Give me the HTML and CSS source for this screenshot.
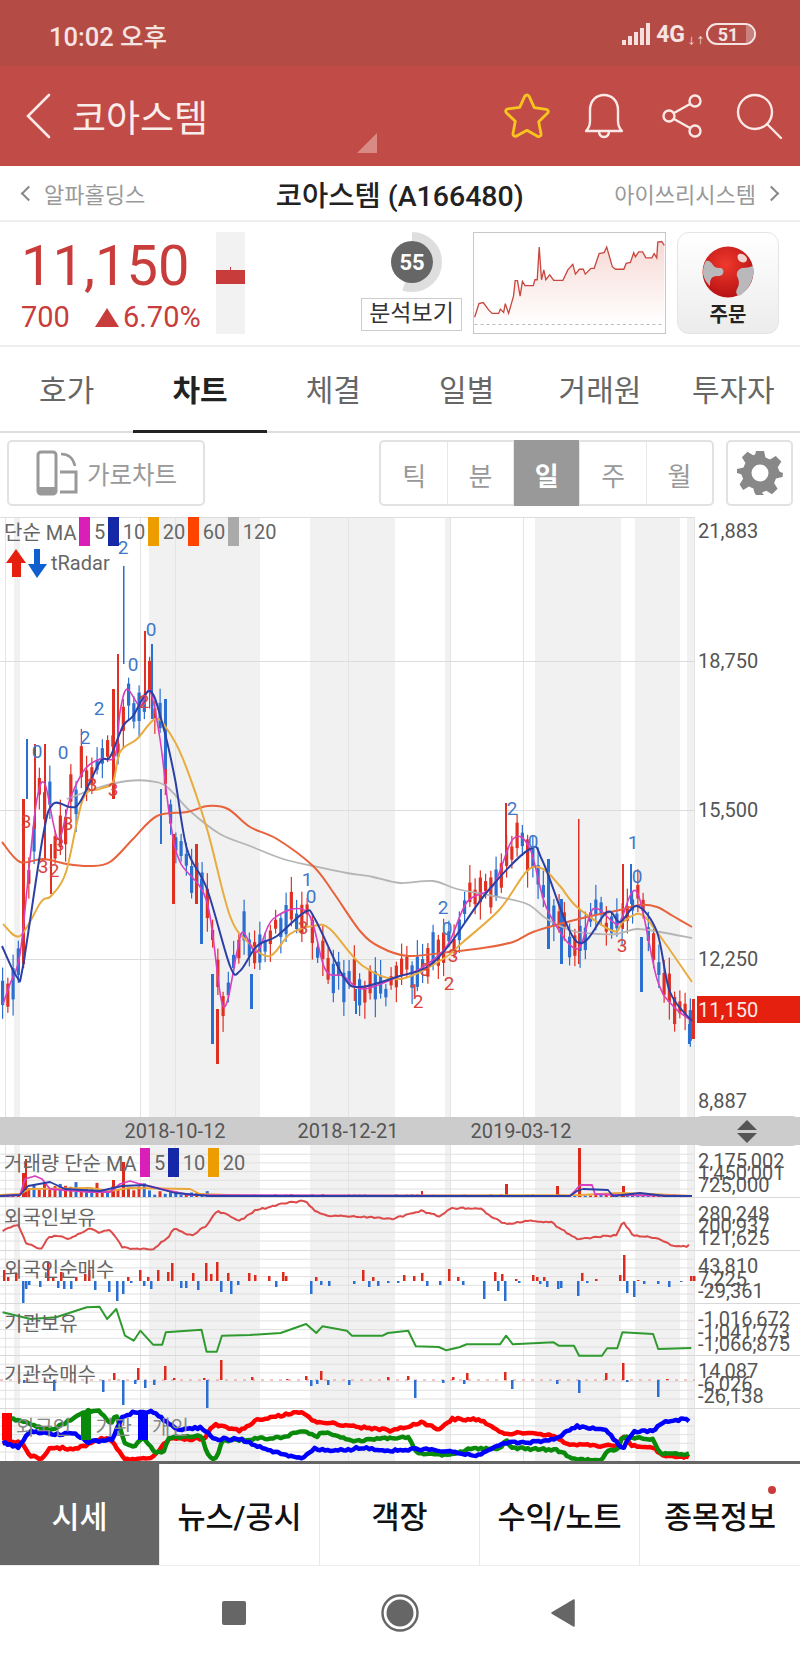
FILE: index.html
```html
<!DOCTYPE html>
<html lang="ko">

<head>
    <meta charset="UTF-8">
    <meta name="viewport" content="width=device-width, initial-scale=1.0">
    <title>코아스템</title>

    <link rel="stylesheet" href="styles.css">
</head>

<body>
    <div class="status-bar">
        <span class="clock">10:02 오후</span>
        <div class="status-right">
            <svg class="signal" width="32" height="24" viewBox="0 0 32 24">
                <path d="M1 18h4v5H1zM7 14h4v9H7zM13 10h4v13h-4zM19 6h4v17h-4zM25 1h4v22h-4z" fill="#f6dedc"/>
            </svg>
            <span class="net">4G</span>
            <span class="net-arrows">↓↑</span>
            <div class="battery"><span class="battery-level"></span><span class="battery-num">51</span></div>
        </div>
    </div>

    <header class="app-header">
        <svg class="back" width="26" height="46" viewBox="0 0 26 46">
            <path d="M24 2L3 23l21 21" fill="none" stroke="#fbe9e7" stroke-width="2.6" stroke-linecap="round"/>
        </svg>
        <h1 class="stock-title">코아스템</h1>
        <span class="corner-mark"></span>
        <div class="header-icons">
            <svg class="ic-star" width="50" height="48" viewBox="0 0 50 48">
                <path d="M25 3c1 0 1.800 .6 2.300 1.700l5 11 11.800 1.600c2.200 .3 2.900 2.600 1.300 4l-8.700 8.400 2.300 12.100c.4 2.100-1.700 3.500-3.600 2.500L25 38.300l-10.400 5.600c-1.900 1-4-.4-3.600-2.500l2.300-12.100-8.700-8.400c-1.600-1.400-.9-3.700 1.300-4l11.800-1.600 5-11C23.200 3.600 24 3 25 3z" fill="none" stroke="#f7c51e" stroke-width="2.800" stroke-linejoin="round"/>
            </svg>
            <svg class="ic-bell" width="42" height="46" viewBox="0 0 42 46">
                <path d="M3 38c3-3 4-6 4-10V17C7 8 13 2 21 2s14 6 14 15v11c0 4 1 7 4 10zM16 38c0 4 2 6 5 6s5-2 5-6" fill="none" stroke="#fbe9e7" stroke-width="2.400" stroke-linejoin="round"/>
            </svg>
            <svg class="ic-share" width="42" height="46" viewBox="0 0 42 46">
                <circle cx="33" cy="8" r="5.500" fill="none" stroke="#fbe9e7" stroke-width="2.400"/>
                <circle cx="7" cy="23" r="5.500" fill="none" stroke="#fbe9e7" stroke-width="2.400"/>
                <circle cx="33" cy="38" r="5.500" fill="none" stroke="#fbe9e7" stroke-width="2.400"/>
                <path d="M12 20l16-9M12 26l16 9" stroke="#fbe9e7" stroke-width="2.400"/>
            </svg>
            <svg class="ic-search" width="48" height="48" viewBox="0 0 48 48">
                <circle cx="20" cy="20" r="17" fill="none" stroke="#fbe9e7" stroke-width="2.400"/>
                <path d="M32 32l14 14" stroke="#fbe9e7" stroke-width="2.400" stroke-linecap="round"/>
            </svg>
        </div>
    </header>

    <nav class="stock-nav">
        <a class="stock-link"><i class="chev chev-left"></i>알파홀딩스</a>
        <strong class="stock-name">코아스템 (A166480)</strong>
        <a class="stock-link">아이쓰리시스템<i class="chev chev-right"></i></a>
    </nav>

    <section class="quote">
        <div class="price-box">
            <div class="price">11,150</div>
            <div class="change"><span>700</span><i class="up-tri"></i><span>6.70%</span></div>
        </div>
        <div class="day-candle"><span class="day-body"></span></div>
        <div class="score">
            <svg width="62" height="62" viewBox="0 0 62 62">
                <circle cx="31" cy="31" r="25.500" fill="none" stroke="#dedede" stroke-width="9" stroke-dasharray="88 200" transform="rotate(-90 31 31)"/>
                <circle cx="31" cy="31" r="21" fill="#666"/>
                <text x="31" y="38.500" text-anchor="middle" class="score-num">55</text>
            </svg>
            <span class="score-btn">분석보기</span>
        </div>
        <div class="spark">
            <svg width="191" height="100" viewBox="340 22 580 306" preserveAspectRatio="none">
                <defs>
                    <linearGradient id="sparkFill" x1="0" y1="0" x2="0" y2="1">
                        <stop offset="0" stop-color="#f6d9d4"/>
                        <stop offset="1" stop-color="#ffffff"/>
                    </linearGradient>
                </defs>
                <path d="M342 280L355 238 368 235 385 258 395 268 415 268 420 255 430 265 435 238 445 268 460 215 465 168 472 168 480 215 487 170 495 183 520 183 525 165 532 165 538 65 545 165 552 135 558 165 570 150 582 167 610 167 625 135 640 118 648 148 660 133 672 133 678 148 695 130 705 130 720 85 735 82 743 65 760 125 770 133 795 133 802 115 815 112 825 82 830 95 840 80 852 80 862 98 880 98 887 85 895 98 898 50 910 48 918 60V300H342z" fill="url(#sparkFill)"/>
                <path d="M342 280L355 238 368 235 385 258 395 268 415 268 420 255 430 265 435 238 445 268 460 215 465 168 472 168 480 215 487 170 495 183 520 183 525 165 532 165 538 65 545 165 552 135 558 165 570 150 582 167 610 167 625 135 640 118 648 148 660 133 672 133 678 148 695 130 705 130 720 85 735 82 743 65 760 125 770 133 795 133 802 115 815 112 825 82 830 95 840 80 852 80 862 98 880 98 887 85 895 98 898 50 910 48 918 60" fill="none" stroke="#c8473f" stroke-width="4"/>
                <path d="M342 302H918" stroke="#bbb" stroke-width="3" stroke-dasharray="9 9"/>
            </svg>
        </div>
        <div class="order-btn">
            <svg width="52" height="52" viewBox="0 0 52 52">
                <defs>
                    <radialGradient id="ballRed" cx=".45" cy=".35" r=".7">
                        <stop offset="0" stop-color="#f0392c"/>
                        <stop offset="1" stop-color="#b30f12"/>
                    </radialGradient>
                </defs>
                <circle cx="26" cy="26" r="25.500" fill="url(#ballRed)"/>
                <path d="M1 26c0-4 1-8 3-11 3-1 5 1 7 4 2 3 5 3 8 3 3 1 3 5 1 7-3 2-6 0-9 2-3 2-3 5-3 9-4-4-7-9-7-14z" fill="#b9b8bb"/>
                <path d="M51 20c2 10-2 21-12 29-4 2-6-2-4-6 3-5 2-9 0-13-1-5 3-8 6-8 3 0 7-1 10-2z" fill="#b9b8bb"/>
                <path d="M37 8c3-1 8 2 8 5 0 3-3 4-6 3-3-1-5-6-2-8z" fill="#f0d4d0"/>
            </svg>
            <span>주문</span>
        </div>
    </section>

    <div class="tabs">
        <div class="tab">호가</div>
        <div class="tab tab-on">차트</div>
        <div class="tab">체결</div>
        <div class="tab">일별</div>
        <div class="tab">거래원</div>
        <div class="tab">투자자</div>
    </div>

    <div class="toolbar">
        <div class="land-btn">
            <svg width="42" height="46" viewBox="0 0 42 46">
                <rect x="2" y="2" width="18" height="42" rx="3" fill="none" stroke="#999" stroke-width="3"/>
                <rect x="2" y="37" width="18" height="7" fill="#999"/>
                <path d="M24 22h16v20H24" fill="none" stroke="#999" stroke-width="3"/>
                <path d="M25 4c6 0 12 3 14 12" fill="none" stroke="#999" stroke-width="2.500"/>
            </svg>
            <span>가로차트</span>
        </div>
        <div class="periods">
            <div class="period">틱</div>
            <div class="period">분</div>
            <div class="period period-on">일</div>
            <div class="period">주</div>
            <div class="period">월</div>
        </div>
        <div class="gear-btn">
            <svg width="46" height="46" viewBox="0 0 46 46">
                <path d="M19 1h8l1.500 6.500 4.500 1.900 5.700-3.500 5.600 5.600-3.500 5.700 1.900 4.500L46 23v0l-.5 4-6.500 1.500-1.900 4.500 3.500 5.700-5.600 5.600-5.700-3.500-4.500 1.900L27 45h-8l-1.500-2.300-1.100-4.200-4.500-1.900-5.700 3.500-3.600-5.600 3.500-5.700L4.200 24.300 0 23v-4l6.500-1.500 1.900-4.500-3.500-5.700 5.600-5.600 5.700 3.500 1.900-.8z" fill="#888"/>
                <circle cx="23" cy="23" r="8.500" fill="#fff"/>
            </svg>
        </div>
    </div>

    <section class="chart">
        <div class="chart-main">
            <svg id="mainChart" width="800" height="600" viewBox="0 518 800 600"></svg>
            <div class="ma-legend">
                <span>단순 MA</span><i class="sw sw-5"></i><span>5</span><i class="sw sw-10"></i><span>10</span><i class="sw sw-20"></i><span>20</span><i class="sw sw-60"></i><span>60</span><i class="sw sw-120"></i><span>120</span>
            </div>
            <div class="radar-legend">
                <svg width="46" height="30" viewBox="0 0 46 30">
                    <path d="M14 1l10 14h-5v14h-9V15H4z" fill="#e5200e"/>
                    <path d="M32 1h6v15h7L35 30 26 16h6z" fill="#0f5fcf"/>
                </svg>
                <span>tRadar</span>
            </div>
        </div>
        <div class="date-bar">
            <span class="date d1">2018-10-12</span>
            <span class="date d2">2018-12-21</span>
            <span class="date d3">2019-03-12</span>
            <div class="handle"><i class="tri-up"></i><i class="tri-down"></i></div>
        </div>
        <div class="chart-sub">
            <svg id="subChart" width="800" height="316" viewBox="0 1146 800 316"></svg>
            <div class="sub-legend sl-vol">
                <span>거래량 단순 MA</span><i class="sw sw-5"></i><span>5</span><i class="sw sw-10"></i><span>10</span><i class="sw sw-20"></i><span>20</span>
            </div>
            <div class="sub-legend sl-for">외국인보유</div>
            <div class="sub-legend sl-fnet">외국인순매수</div>
            <div class="sub-legend sl-ins">기관보유</div>
            <div class="sub-legend sl-inet">기관순매수</div>
            <div class="sub-legend sl-cmp">
                <i class="bk bk-r"></i><span>외국인</span><i class="bk bk-g"></i><span>기관</span><i class="bk bk-b"></i><span>개인</span>
            </div>
        </div>
    </section>

    <div class="bottom-tabs">
        <div class="btab btab-on">시세</div>
        <div class="btab">뉴스/공시</div>
        <div class="btab">객장</div>
        <div class="btab">수익/노트</div>
        <div class="btab">종목정보<i class="dot"></i></div>
    </div>

    <div class="nav-bar">
        <span class="nav-square"></span>
        <svg width="40" height="40" viewBox="0 0 40 40">
            <circle cx="20" cy="20" r="17.500" fill="none" stroke="#666" stroke-width="2.400"/>
            <circle cx="20" cy="20" r="13.500" fill="#666"/>
        </svg>
        <svg width="26" height="30" viewBox="0 0 26 30">
            <path d="M24 2v26L2 15z" fill="#666" stroke="#666" stroke-width="1.500" stroke-linejoin="round"/>
        </svg>
    </div>

    <script src="chart.js"></script>
</body>

</html>
```

FILE: styles.css
```css
* {
    box-sizing: border-box;
}

body {
    margin: 0;
    width: 800px;
    background: #fff;
    font-family: Roboto, "Noto Sans CJK KR", sans-serif;
    color: #333;
}

.status-bar {
    height: 66px;
    background: #b54b45;
    display: flex;
    align-items: center;
    justify-content: space-between;
    padding: 2px 44px 0 49px;
    color: #f6e4e2;
}

.clock {
    font-size: 25.5px;
    font-weight: 500;
}

.status-right {
    display: flex;
    align-items: center;
}

.signal {
    margin-right: 3px;
}

.net {
    font-size: 23px;
    font-weight: 700;
}

.net-arrows {
    font-size: 9px;
    width: 21px;
    margin-top: 12px;
    padding-left: 2px;
}

.battery {
    position: relative;
    width: 50px;
    height: 22px;
    border: 2px solid #f6e4e2;
    border-radius: 11px;
    overflow: hidden;
    display: flex;
    align-items: center;
    justify-content: center;
}

.battery-level {
    position: absolute;
    right: 0;
    top: 0;
    bottom: 0;
    width: 8px;
    background: #c9827e;
}

.battery-num {
    position: relative;
    font-size: 18px;
    font-weight: 700;
    margin-right: 6px;
}

.app-header {
    height: 100px;
    background: #c14b46;
    display: flex;
    align-items: center;
    padding-left: 25px;
}

.stock-title {
    margin: 0 0 0 21px;
    font-size: 37px;
    font-weight: 400;
    color: #f9ecea;
}

.corner-mark {
    width: 0;
    height: 0;
    margin: 54px 0 0 149px;
    border-left: 20px solid transparent;
    border-bottom: 20px solid #d98a85;
}

.header-icons {
    display: flex;
    align-items: center;
    margin-left: 125px;
}

.ic-bell {
    margin-left: 31px;
}

.ic-share {
    margin-left: 37px;
}

.ic-search {
    margin-left: 31px;
}

.stock-nav {
    height: 56px;
    border-bottom: 2px solid #eee;
    display: flex;
    align-items: center;
    justify-content: space-between;
    padding: 0 23px;
}

.stock-link {
    font-size: 22px;
    color: #999;
    display: flex;
    align-items: center;
}

.chev {
    width: 11px;
    height: 11px;
    border-left: 2px solid #888;
    border-bottom: 2px solid #888;
}

.chev-left {
    transform: rotate(45deg);
    margin-right: 10px;
}

.chev-right {
    transform: rotate(225deg);
    margin-left: 10px;
}

.stock-name {
    margin-left: 40px;
    font-size: 28.5px;
    font-weight: 500;
    color: #222;
}

.quote {
    height: 125px;
    border-bottom: 2px solid #eee;
    display: flex;
    padding: 10px 21px 0 0;
    position: relative;
}

.price-box {
    width: 216px;
    padding-left: 21px;
    color: #c93c3c;
}

.price {
    font-size: 56px;
    line-height: 62px;
    margin-top: 3px;
}

.change {
    display: flex;
    align-items: center;
    font-size: 29px;
    line-height: 32px;
    margin-top: 4px;
}

.up-tri {
    width: 0;
    height: 0;
    margin: 0 4px 0 25px;
    border-left: 12px solid transparent;
    border-right: 12px solid transparent;
    border-bottom: 19px solid #c93c3c;
}

.day-candle {
    width: 29px;
    height: 102px;
    background: #f2f2f2;
    padding-top: 38px;
}

.day-body {
    display: block;
    position: relative;
    height: 14px;
    background: #c93c3c;
}

.day-body::before {
    content: "";
    position: absolute;
    left: 14px;
    top: -3px;
    width: 1px;
    height: 3px;
    background: #c93c3c;
}

.score {
    width: 101px;
    margin-left: 116px;
    display: flex;
    flex-direction: column;
    align-items: center;
}

.score svg {
    margin-left: 0;
    margin-top: -1px;
}

.score-num {
    font-family: Roboto, sans-serif;
    font-size: 22px;
    font-weight: 700;
    fill: #fff;
}

.score-btn {
    width: 101px;
    height: 33px;
    margin-top: 5px;
    border: 1px solid #ccc;
    font-size: 23px;
    line-height: 29px;
    text-align: center;
    color: #333;
}

.spark {
    width: 193px;
    height: 102px;
    margin-left: 11px;
    border: 1px solid #c8c8c8;
}

.spark svg {
    display: block;
}

.order-btn {
    width: 102px;
    height: 102px;
    margin-left: 11px;
    border: 1px solid #e4e4e4;
    border-radius: 12px;
    background: linear-gradient(#fff, #ececec);
    display: flex;
    flex-direction: column;
    align-items: center;
    padding-top: 13px;
    font-size: 20px;
    font-weight: 700;
    color: #222;
}

.order-btn span {
    margin-top: 4px;
    line-height: 26px;
}

.tabs {
    height: 86px;
    border-bottom: 2px solid #ddd;
    display: flex;
}

.tab {
    width: 133.33px;
    text-align: center;
    padding-top: 24px;
    font-size: 30px;
    line-height: 40px;
    color: #666;
}

.tab-on {
    height: 86px;
    border-bottom: 3px solid #222;
    font-weight: 700;
    color: #222;
}

.toolbar {
    height: 84px;
    display: flex;
    padding: 7px 7px 0;
}

.land-btn {
    width: 199px;
    height: 66px;
    border: 2px solid #e2e2e2;
    border-radius: 5px;
    display: flex;
    align-items: center;
    padding-left: 27px;
    color: #999;
    font-size: 24.5px;
}

.land-btn span {
    margin-left: 9px;
}

.periods {
    width: 336px;
    height: 66px;
    margin-left: 174px;
    border: 2px solid #e2e2e2;
    border-radius: 5px;
    display: flex;
}

.period {
    flex: 1;
    border-right: 1px solid #e8e8e8;
    text-align: center;
    font-size: 26px;
    line-height: 70px;
    color: #999;
}

.period:last-child {
    border-right: 0;
}

.period-on {
    margin: -2px 0;
    background: #999;
    color: #fff;
    font-weight: 700;
    line-height: 74px;
}

.gear-btn {
    width: 67px;
    height: 66px;
    margin-left: 12px;
    border: 2px solid #e2e2e2;
    border-radius: 5px;
    display: flex;
    align-items: center;
    justify-content: center;
}

.chart {
    display: flex;
    flex-direction: column;
}

.chart-main,
.chart-sub {
    position: relative;
}

.chart svg {
    display: block;
}

.chart text {
    font-family: Roboto, "Noto Sans CJK KR", sans-serif;
}

.ma-legend,
.radar-legend,
.sub-legend {
    position: absolute;
    display: flex;
    align-items: center;
    font-size: 20px;
    color: #666;
}

.ma-legend {
    left: 4px;
    top: 0;
    height: 29px;
}

.radar-legend {
    left: 2px;
    top: 31px;
}

.radar-legend span {
    margin-left: 3px;
}

.sw {
    display: block;
    width: 10.5px;
    height: 29px;
    margin: 0 4px 0 3px;
}

.sw-5 {
    background: #d91fb8;
}

.sw-10 {
    background: #1428a8;
}

.sw-20 {
    background: #ee9d00;
}

.sw-60 {
    background: #ff4400;
}

.sw-120 {
    background: #aaa;
}

.date-bar {
    height: 28px;
    background: #ccc;
    position: relative;
    font-size: 20px;
    line-height: 28px;
    color: #555;
}

.date {
    position: absolute;
    transform: translateX(-50%);
}

.d1 {
    left: 175px;
}

.d2 {
    left: 348px;
}

.d3 {
    left: 521px;
}

.handle {
    position: absolute;
    right: 0;
    top: -1px;
    width: 106px;
    height: 30px;
    background: #ccc;
    border-radius: 8px;
    display: flex;
    flex-direction: column;
    align-items: center;
    justify-content: center;
    gap: 3px;
}

.tri-up,
.tri-down {
    width: 0;
    height: 0;
    border-left: 10px solid transparent;
    border-right: 10px solid transparent;
}

.tri-up {
    border-bottom: 10px solid #555;
}

.tri-down {
    border-top: 10px solid #555;
}

.sub-legend {
    left: 4px;
    height: 29px;
}

.sl-vol {
    top: 3px;
}

.sl-for {
    top: 57px;
}

.sl-fnet {
    top: 109px;
}

.sl-ins {
    top: 163px;
}

.sl-inet {
    top: 214px;
}

.sl-cmp {
    top: 267px;
    left: 2px;
    color: #888;
}

.bk {
    display: block;
    width: 10px;
    height: 27px;
    margin-right: 4px;
}

.bk-r {
    background: #f00;
}

.bk-g {
    background: #0a8a0a;
    margin-left: 10px;
}

.bk-b {
    background: #00f;
    margin-left: 6px;
}

.bottom-tabs {
    height: 105px;
    border-top: 3px solid #666;
    border-bottom: 1px solid #eee;
    display: flex;
}

.btab {
    width: 160px;
    position: relative;
    border-right: 1px solid #e8e8e8;
    text-align: center;
    font-size: 30.5px;
    font-weight: 500;
    line-height: 108px;
    color: #111;
}

.btab:last-child {
    border-right: 0;
}

.btab-on {
    background: #666;
    color: #fff;
}

.dot {
    position: absolute;
    left: 128px;
    top: 22px;
    width: 8px;
    height: 8px;
    border-radius: 50%;
    background: #c93c3c;
}

.nav-bar {
    height: 96px;
    display: flex;
    align-items: center;
    padding-left: 222px;
    padding-bottom: 2px;
}

.nav-square {
    width: 24px;
    height: 24px;
    border-radius: 2px;
    background: #666;
}

.nav-bar svg:nth-child(2) {
    margin-left: 134px;
}

.nav-bar svg:nth-child(3) {
    margin-left: 130px;
}
```

FILE: chart.js
```js
// chart data was read off the picture, all numbers are page coordinates
var RED = '#e03022', BLUE = '#2b6fd0';

var bands = [[14, 20], [149, 260], [310, 395], [445, 450], [535, 621], [635, 680], [687, 695]];
var vlines = [5, 140, 175, 348, 450, 523];

var ma120 = [[67, 800], [100, 788], [127, 782], [150, 782], [167, 788], [190, 812], [220, 835], [250, 847], [283, 860], [313, 867], [347, 874], [373, 878], [400, 884], [433, 882], [457, 890], [493, 897], [527, 905], [547, 920], [573, 932], [600, 935], [617, 935], [637, 930], [660, 933], [692, 939]];
var ma60 = [[2, 843], [20, 863], [43, 860], [67, 865], [90, 867], [110, 863], [133, 840], [157, 817], [187, 813], [208, 807], [228, 810], [250, 828], [277, 840], [313, 867], [333, 893], [360, 932], [380, 948], [408, 957], [449, 953], [483, 949], [513, 943], [533, 933], [567, 923], [600, 915], [620, 911], [640, 906], [657, 908], [673, 917], [692, 928]];
var ma20 = [[3, 925], [20, 937], [41, 903], [51, 897], [66, 873], [83, 800], [100, 790], [113, 783], [120, 753], [137, 740], [155, 720], [167, 730], [183, 760], [207, 830], [230, 917], [250, 945], [270, 957], [290, 935], [313, 927], [330, 930], [363, 967], [400, 980], [443, 960], [463, 943], [500, 910], [527, 872], [543, 870], [560, 887], [577, 908], [613, 932], [623, 923], [640, 915], [657, 933], [692, 983]];
var ma10 = [[2, 947], [17, 978], [23, 967], [43, 837], [53, 805], [70, 808], [80, 803], [100, 763], [110, 758], [123, 727], [133, 717], [150, 692], [163, 727], [175, 780], [187, 850], [207, 890], [230, 967], [240, 972], [257, 947], [277, 937], [305, 913], [315, 920], [343, 977], [360, 988], [400, 977], [427, 968], [450, 945], [487, 893], [530, 850], [543, 863], [577, 943], [607, 913], [620, 923], [637, 907], [657, 933], [670, 993], [692, 1022]];
var ma5 = [[3, 1005], [10, 985], [20, 955], [30, 860], [37, 800], [45, 785], [58, 840], [70, 800], [85, 770], [100, 760], [115, 757], [120, 713], [127, 690], [140, 707], [150, 692], [160, 740], [170, 820], [180, 863], [207, 903], [223, 1007], [237, 953], [243, 933], [257, 953], [273, 920], [307, 913], [325, 970], [343, 977], [363, 990], [400, 977], [420, 970], [447, 947], [467, 903], [493, 887], [513, 840], [530, 850], [547, 910], [577, 950], [593, 910], [613, 923], [620, 923], [637, 893], [657, 980], [673, 1007], [692, 1022]];

// extra long candles that stand out from the rest: x, top, bottom, colour, width
var bigCandles = [
    [123, 567, 665, BLUE, 1.5], [22, 800, 965, RED, 3], [216, 1010, 1065, RED, 3], [578, 820, 965, RED, 1.5],
    [505, 804, 850, RED, 2], [211, 975, 1045, BLUE, 3], [144, 632, 700, RED, 2], [151, 645, 720, BLUE, 2],
    [117, 655, 760, RED, 2], [112, 690, 800, RED, 3], [640, 938, 993, BLUE, 3], [622, 865, 930, RED, 2],
    [50, 845, 895, RED, 2], [26, 740, 800, BLUE, 2], [44, 745, 860, RED, 2], [250, 975, 1010, BLUE, 3],
    [164, 700, 770, BLUE, 3], [160, 790, 845, BLUE, 2], [630, 865, 905, BLUE, 2], [692, 1000, 1040, RED, 3],
    [688, 1025, 1045, BLUE, 2], [355, 990, 1015, BLUE, 2], [172, 835, 905, RED, 3], [195, 845, 905, RED, 3],
    [200, 880, 945, BLUE, 3], [34, 745, 830, RED, 2], [547, 860, 950, BLUE, 3], [560, 900, 965, BLUE, 3]
];

var marks = [
    [123, 548, '2', 1], [151, 630, '0', 1], [133, 665, '0', 1], [99, 709, '2', 1], [85, 738, '2', 1], [63, 753, '0', 1], [37, 752, '0', 1],
    [307, 880, '1', 1], [311, 897, '0', 1], [512, 809, '2', 1], [533, 842, '0', 1], [633, 843, '1', 1], [637, 877, '0', 1], [443, 908, '2', 1], [447, 929, '0', 1],
    [144, 702, '2', 0], [92, 785, '3', 0], [113, 790, '3', 0], [26, 822, '3', 0], [68, 824, '3', 0], [59, 845, '3', 0], [43, 867, '3', 0], [54, 871, '2', 0],
    [303, 928, '3', 0], [622, 946, '3', 0], [453, 956, '3', 0], [449, 984, '2', 0], [414, 991, '1', 0], [418, 1002, '2', 0], [425, 970, '3', 0]
];

// small generator so the candles come out the same on every run
var seed = 4711;
function rnd() {
    seed = (seed * 16807) % 2147483647;
    return seed / 2147483647;
}

function interp(line, x) {
    if (x <= line[0][0]) return line[0][1];
    for (var i = 1; i < line.length; i++) {
        if (x <= line[i][0]) {
            var a = line[i - 1], b = line[i];
            return a[1] + (b[1] - a[1]) * (x - a[0]) / (b[0] - a[0]);
        }
    }
    return line[line.length - 1][1];
}

function poly(line, color, width) {
    var pts = line.map(function (p) { return p[0].toFixed(1) + ',' + p[1].toFixed(1); }).join(' ');
    return '<polyline points="' + pts + '" fill="none" stroke="' + color + '" stroke-width="' + width + '" stroke-linejoin="round"/>';
}

// moving averages are curves, catmull-rom through the read points
function curve(line, color, width) {
    var d = 'M' + line[0][0] + ' ' + line[0][1];
    for (var i = 0; i < line.length - 1; i++) {
        var p0 = line[i - 1] || line[i], p1 = line[i], p2 = line[i + 1], p3 = line[i + 2] || p2;
        d += 'C' + (p1[0] + (p2[0] - p0[0]) / 6).toFixed(1) + ' ' + (p1[1] + (p2[1] - p0[1]) / 6).toFixed(1) + ' ' +
            (p2[0] - (p3[0] - p1[0]) / 6).toFixed(1) + ' ' + (p2[1] - (p3[1] - p1[1]) / 6).toFixed(1) + ' ' + p2[0] + ' ' + p2[1];
    }
    return '<path d="' + d + '" fill="none" stroke="' + color + '" stroke-width="' + width + '"/>';
}

// daily values: one point per candle with a little noise
function rough(line, amp) {
    var out = [];
    for (var x = line[0][0]; x < line[line.length - 1][0]; x += 2.6) {
        out.push([x, interp(line, x) + (rnd() - 0.5) * amp]);
    }
    return out;
}

function rect(x, y, w, h, color) {
    return '<rect x="' + x + '" y="' + y + '" width="' + w + '" height="' + h + '" fill="' + color + '"/>';
}

function axisText(x, y, str, color) {
    return '<text x="' + x + '" y="' + (y + 7) + '" font-size="20" fill="' + (color || '#555') + '">' + str + '</text>';
}

function backdrop(top, bottom) {
    var s = '';
    bands.forEach(function (b) { s += rect(b[0], top, b[1] - b[0], bottom - top, '#f1f1f1'); });
    vlines.forEach(function (x) { s += rect(x, top, 1, bottom - top, '#e4e4e4'); });
    return s;
}

function drawMain() {
    var s = backdrop(518, 1118);
    s += rect(0, 518, 695, 1, '#ddd');
    s += rect(694, 518, 1, 600, '#e4e4e4');
    [662, 811, 960].forEach(function (y) { s += rect(0, y, 695, 1, '#dcdcdc'); });

    // candles sit around the 5 day line
    for (var x = 1; x < 692; x += 5.25) {
        var spread = x > 20 && x < 60 ? 60 : (x > 60 && x < 170 ? 36 : 24);
        var c = interp(ma5, x) + (rnd() - 0.5) * spread;
        var bodyH = 8 + rnd() * 24;
        var up = 4 + rnd() * 14, down = 4 + rnd() * 14;
        var color = rnd() < 0.5 ? RED : BLUE;
        s += rect(x + 1, (c - bodyH / 2 - up).toFixed(1), 1.2, (bodyH + up + down).toFixed(1), color);
        s += rect(x, (c - bodyH / 2).toFixed(1), 3.2, bodyH.toFixed(1), color);
    }
    bigCandles.forEach(function (b) { s += rect(b[0], b[1], b[4], b[2] - b[1], b[3]); });

    s += curve(ma120, '#b5b5b5', 1.8);
    s += curve(ma60, '#e8623c', 2);
    s += curve(ma20, '#e8ab3e', 2);
    s += curve(ma5, '#d83fc0', 1.6);
    s += curve(ma10, '#2c3fa5', 2);

    marks.forEach(function (m) {
        s += '<text x="' + m[0] + '" y="' + (m[1] + 7) + '" text-anchor="middle" font-size="19" fill="' + (m[3] ? '#3f78c8' : '#d8433c') + '">' + m[2] + '</text>';
    });

    s += axisText(698, 532, '21,883') + axisText(698, 662, '18,750') + axisText(698, 811, '15,500') + axisText(698, 960, '12,250') + axisText(698, 1102, '8,887');
    s += rect(697, 997, 103, 27, '#e5200e');
    s += axisText(698, 1011, '11,150', '#fbe9e7');
    document.getElementById('mainChart').innerHTML = s;
}

// the lower panels were read from a crop squeezed to 1.96x / 3x
function crop(line) {
    return line.map(function (p) { return [p[0] / 1.96, 1110 + p[1] / 3]; });
}

var foreign = crop([[5, 365], [35, 345], [50, 400], [80, 420], [95, 385], [115, 380], [135, 390], [175, 358], [195, 372], [215, 362], [240, 415], [270, 420], [300, 420], [330, 385], [340, 358], [375, 380], [405, 350], [425, 305], [470, 335], [500, 305], [560, 282], [600, 275], [615, 305], [650, 322], [700, 322], [770, 330], [825, 305], [860, 322], [885, 297], [940, 298], [965, 325], [990, 345], [1040, 335], [1080, 340], [1130, 390], [1210, 378], [1220, 335], [1240, 378], [1280, 385], [1320, 410], [1345, 412], [1355, 400]]);
var inst = crop([[5, 610], [60, 630], [110, 625], [170, 595], [195, 593], [210, 630], [228, 600], [245, 680], [262, 695], [275, 665], [300, 707], [318, 707], [325, 670], [395, 662], [405, 728], [425, 728], [435, 680], [490, 678], [550, 672], [600, 645], [620, 672], [632, 652], [680, 665], [690, 680], [750, 680], [760, 672], [800, 665], [815, 712], [860, 714], [875, 724], [900, 715], [915, 706], [980, 706], [992, 680], [1005, 706], [1085, 700], [1095, 710], [1125, 710], [1135, 740], [1180, 740], [1190, 718], [1210, 718], [1220, 670], [1280, 675], [1290, 720], [1355, 717]]);
var cmpRed = crop([[5, 1000], [40, 1000], [60, 1040], [80, 1050], [100, 1015], [150, 1020], [195, 990], [215, 990], [245, 1050], [300, 1045], [330, 990], [400, 990], [420, 945], [470, 965], [500, 935], [590, 908], [615, 935], [680, 950], [770, 965], [825, 940], [860, 960], [885, 930], [940, 932], [990, 975], [1040, 970], [1085, 980], [1110, 1005], [1210, 1012], [1220, 980], [1240, 1010], [1280, 1015], [1300, 1040], [1355, 1045]]);
var cmpGreen = crop([[5, 920], [40, 935], [100, 965], [170, 905], [195, 905], [215, 945], [228, 920], [245, 1005], [262, 1015], [280, 985], [305, 1030], [320, 1030], [330, 985], [395, 982], [410, 1048], [425, 1048], [435, 995], [550, 985], [600, 965], [620, 985], [632, 968], [690, 995], [800, 985], [815, 1030], [880, 1040], [920, 1020], [980, 1020], [992, 995], [1005, 1018], [1090, 1022], [1130, 1052], [1180, 1052], [1190, 1022], [1210, 1022], [1220, 985], [1280, 990], [1295, 1035], [1355, 1035]]);
var cmpBlue = crop([[5, 1000], [35, 1015], [60, 965], [100, 975], [150, 975], [170, 1000], [220, 990], [240, 925], [260, 910], [300, 908], [350, 965], [395, 955], [420, 990], [470, 990], [520, 1020], [590, 1050], [615, 1020], [680, 1025], [705, 1015], [770, 1025], [820, 1020], [870, 1025], [940, 1040], [990, 1000], [1040, 1000], [1085, 990], [1130, 952], [1190, 965], [1220, 1020], [1240, 970], [1280, 965], [1300, 940], [1340, 930], [1355, 940]]);

var foreignUp = [[3, 11], [7, 4], [15, 8], [47, 19], [52, 4], [60, 9], [75, 4], [84, 7], [88, 11], [127, 4], [139, 11], [147, 4], [157, 11], [167, 9], [171, 18], [192, 8], [205, 18], [210, 7], [216, 19], [227, 8], [248, 8], [254, 6], [268, 5], [282, 9], [285, 5], [315, 4], [362, 11], [372, 4], [403, 6], [413, 5], [421, 8], [448, 12], [457, 4], [494, 9], [501, 7], [515, 2], [532, 6], [536, 4], [543, 4], [581, 8], [595, 2], [619, 6], [623, 26], [637, 1], [690, 5], [693, 5]];
var foreignDown = [[22, 22], [25, 8], [28, 4], [39, 6], [57, 7], [63, 8], [70, 8], [94, 9], [108, 11], [116, 20], [122, 13], [130, 2], [143, 5], [150, 8], [180, 7], [185, 7], [197, 9], [220, 11], [230, 13], [237, 4], [275, 6], [310, 13], [320, 4], [328, 5], [353, 3], [368, 6], [377, 5], [387, 2], [397, 2], [426, 5], [439, 4], [462, 4], [483, 18], [497, 10], [504, 20], [518, 2], [539, 3], [546, 6], [557, 8], [560, 7], [577, 15], [586, 2], [626, 12], [633, 16], [643, 3], [657, 3], [668, 6], [680, 1]];
var instUp = [[113, 7], [137, 12], [164, 14], [173, 2], [203, 2], [220, 20], [251, 3], [286, 1], [305, 4], [320, 9], [387, 3], [407, 4], [452, 3], [466, 7], [504, 8], [605, 7], [622, 17], [666, 1]];
var instDown = [[23, 3], [53, 11], [102, 12], [122, 25], [134, 4], [144, 8], [153, 5], [206, 28], [310, 6], [316, 4], [327, 5], [348, 5], [414, 18], [442, 3], [463, 4], [511, 9], [556, 4], [578, 13], [626, 2], [657, 17]];

var volMa5 = [[0, 1197], [20, 1196], [25, 1180], [35, 1177], [42, 1180], [50, 1190], [90, 1193], [110, 1193], [120, 1185], [130, 1182], [140, 1185], [170, 1192], [190, 1196], [570, 1197], [575, 1192], [580, 1186], [592, 1186], [595, 1195], [620, 1196], [692, 1197]];
var volMa10 = [[0, 1197], [20, 1196], [28, 1187], [50, 1183], [65, 1190], [100, 1192], [122, 1187], [145, 1186], [175, 1194], [210, 1197], [570, 1197], [577, 1192], [583, 1190], [608, 1191], [613, 1197], [640, 1194], [665, 1197], [692, 1197]];
var volMa20 = [[0, 1196], [20, 1195], [30, 1190], [90, 1189], [110, 1192], [130, 1189], [190, 1190], [200, 1195], [260, 1197], [580, 1196], [620, 1194], [650, 1195], [692, 1197]];

function drawSub() {
    var s = backdrop(1146, 1462);
    var panels = [1146, 1198, 1251, 1304, 1356, 1409];
    panels.forEach(function (top) {
        if (top === 1146) return;
        s += rect(0, top, 800, 1, '#d8d8d8');
    });
    panels.forEach(function (top) {
        for (var n = 1; n < 6; n++) s += rect(0, top + n * 8.7, 695, 1, '#e0e0e0');
    });
    s += rect(694, 1146, 1, 316, '#e4e4e4');

    // volume
    for (var x = 1; x < 692; x += 5.25) {
        var busy = (x > 20 && x < 150) ? 5 + rnd() * 10 : (x > 150 && x < 210 ? 1 + rnd() * 5 : 1 + rnd() * 2);
        s += rect(x, (1198 - busy).toFixed(1), 3, busy.toFixed(1), rnd() < 0.5 ? RED : BLUE);
    }
    [[22, 1174, 3], [25, 1160, 2], [112, 1181, 3], [122, 1163, 3], [421, 1192, 2], [505, 1185, 3], [556, 1187, 3], [578, 1149, 3], [622, 1187, 3]].forEach(function (b) {
        s += rect(b[0], b[1], b[2], 1198 - b[1], '#dc2a1c');
    });
    s += poly(volMa20, '#eaa63a', 1.8) + poly(volMa5, '#d83fc0', 1.8) + poly(volMa10, '#2c3fa5', 1.8);

    s += poly(rough(foreign, 1.6), '#dc4a4a', 2);

    foreignUp.forEach(function (b) { s += rect(b[0], 1282 - b[1], 2.5, b[1], '#dc2a1c'); });
    foreignDown.forEach(function (b) { s += rect(b[0], 1282, 2.5, b[1], BLUE); });

    s += poly(inst, '#2f9a2f', 2);

    s += '<path d="M0 1381H695" stroke="#e88" stroke-width="1" stroke-dasharray="3 6"/>';
    instUp.forEach(function (b) { s += rect(b[0], 1381 - b[1], 2.5, b[1], '#dc2a1c'); });
    instDown.forEach(function (b) { s += rect(b[0], 1381, 2.5, b[1], BLUE); });

    s += poly(rough(cmpRed, 2.4), '#f00', 4.5) + poly(rough(cmpGreen, 2.4), '#0a8a0a', 4.5) + poly(rough(cmpBlue, 2.4), '#00f', 4.5);

    var labels = [[1162, '2,175,002'], [1174, '1,450,001'], [1186, '725,000'], [1215, '280,248'], [1227, '200,937'], [1239, '121,625'], [1267, '43,810'], [1280, '7,225'], [1292, '-29,361'], [1320, '-1,016,672'], [1333, '-1,041,773'], [1345, '-1,066,875'], [1372, '14,087'], [1385, '-6,026'], [1397, '-26,138']];
    labels.forEach(function (l) { s += axisText(698, l[0], l[1]); });
    document.getElementById('subChart').innerHTML = s;
}

drawMain();
drawSub();
```
